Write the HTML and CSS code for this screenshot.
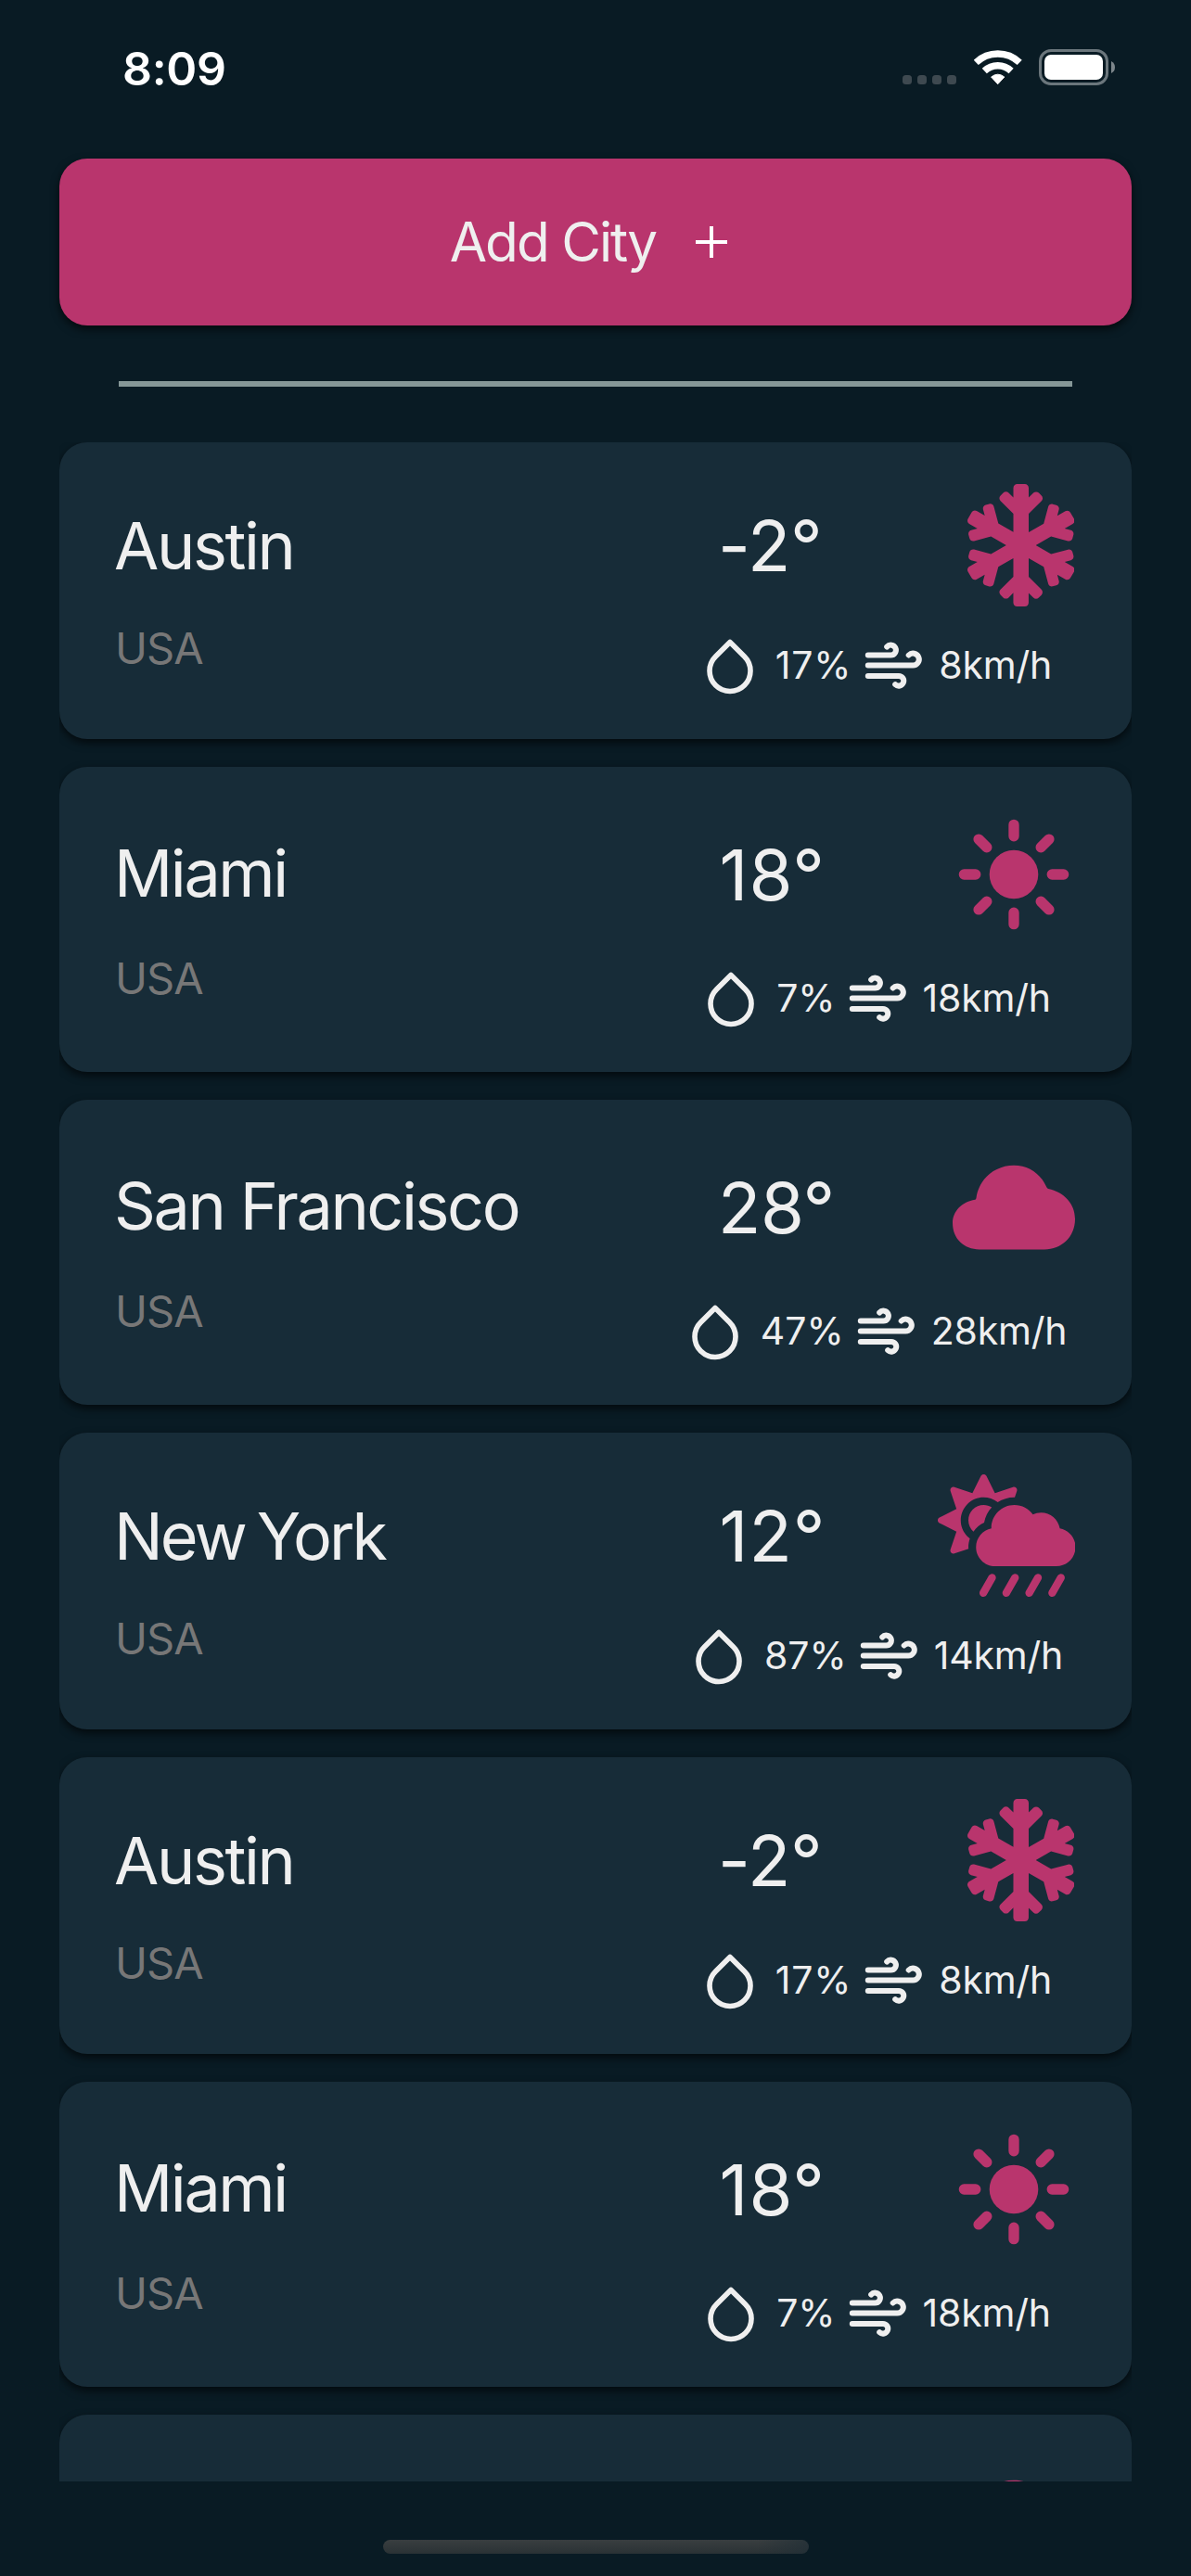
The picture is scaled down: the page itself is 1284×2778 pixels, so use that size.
FILE: index.html
```html
<!DOCTYPE html>
<html lang="en">
<head>
<meta charset="utf-8">
<title>Weather</title>
<link rel="stylesheet" href="styles.css">
</head>
<body>
<svg class="sprite" aria-hidden="true">
  <symbol id="drop" viewBox="0 0 24 24"><path fill="none" stroke="currentColor" stroke-width="2.05" stroke-linecap="round" stroke-linejoin="round" d="M12 2.69l5.66 5.66a8 8 0 1 1-11.31 0z"/></symbol>
  <symbol id="wind" viewBox="0 0 66 66"><path fill="none" stroke="currentColor" stroke-width="6" stroke-linecap="round" stroke-linejoin="round" d="M5.8 21.6H30.3A5.5 5.5 0 1 0 26.2 12.5M5.8 32.6H54.3A6.5 6.5 0 1 0 49.7 21.5M5.8 43.9H38.85A5.35 5.35 0 1 1 35.2 53.1"/></symbol>
  <symbol id="snow" viewBox="0 0 448 512"><path fill="currentColor" d="M440.3 345.2l-33.8-19.5 26-7c8.2-2.2 13.1-10.7 10.9-18.9l-4-14.9c-2.2-8.2-10.7-13.1-18.9-10.9l-70.8 19-63.9-37 63.8-36.9 70.8 19c8.2 2.2 16.7-2.7 18.9-10.9l4-14.9c2.2-8.2-2.7-16.7-10.9-18.9l-26-7 33.8-19.5c7.4-4.3 9.9-13.7 5.7-21.1L430.4 119c-4.3-7.4-13.7-9.9-21.1-5.7l-33.8 19.5 7-26c2.2-8.2-2.7-16.7-10.9-18.9l-14.9-4c-8.2-2.2-16.7 2.7-18.9 10.9l-19 70.8-62.8 36.2v-77.5l53.7-53.1c6.2-6.2 6.2-16.4 0-22.6l-11.3-11.3c-6.2-6.2-16.4-6.2-22.6 0L256 56.4V16c0-8.8-7.2-16-16-16h-32c-8.8 0-16 7.2-16 16v40.4l-19.7-19.7c-6.2-6.2-16.4-6.2-22.6 0L138.3 48c-6.3 6.2-6.3 16.4 0 22.6l53.7 53.1v77.5l-62.8-36.2-19-70.8c-2.2-8.2-10.7-13.1-18.9-10.9l-14.9 4c-8.2 2.2-13.1 10.7-10.9 18.9l7 26-33.8-19.5c-7.4-4.3-16.8-1.7-21.1 5.7L2.1 145.7c-4.3 7.4-1.7 16.8 5.7 21.1l33.8 19.5-26 7c-8.3 2.2-13.2 10.7-11 19l4 14.9c2.2 8.2 10.7 13.1 18.9 10.9l70.8-19 63.8 36.9-63.8 36.9-70.8-19c-8.2-2.2-16.7 2.7-18.9 10.9l-4 14.9c-2.2 8.2 2.7 16.7 10.9 18.9l26 7-33.8 19.6c-7.4 4.3-9.9 13.7-5.7 21.1l15.5 26.8c4.3 7.4 13.7 9.9 21.1 5.7l33.8-19.5-7 26c-2.2 8.2 2.7 16.7 10.9 18.9l14.9 4c8.2 2.2 16.7-2.7 18.9-10.9l19-70.8 62.8-36.2v77.5l-53.7 53.1c-6.3 6.2-6.3 16.4 0 22.6l11.3 11.3c6.2 6.2 16.4 6.2 22.6 0l19.7-19.7V496c0 8.8 7.2 16 16 16h32c8.8 0 16-7.2 16-16v-40.4l19.7 19.7c6.2 6.2 16.4 6.2 22.6 0l11.3-11.3c6.2-6.2 6.2-16.4 0-22.6L256 387.7v-77.5l62.8 36.2 19 70.8c2.2 8.2 10.7 13.1 18.9 10.9l14.9-4c8.2-2.2 13.1-10.7 10.9-18.9l-7-26 33.8 19.5c7.4 4.3 16.8 1.7 21.1-5.7l15.5-26.8c4.3-7.4 1.8-16.8-5.6-21z"/></symbol>
  <symbol id="sun" viewBox="0 0 512 512"><circle cx="256" cy="256" r="102" fill="currentColor"/><path stroke="currentColor" stroke-width="44" stroke-linecap="round" d="M256 48v48M256 416v48M48 256h48M416 256h48M403.1 108.9l-33.9 33.9M142.8 369.2l-33.9 33.9M403.1 403.1l-33.9-33.9M142.8 142.8l-33.9-33.9"/></symbol>
  <symbol id="cloud" viewBox="0 0 512 512"><path fill="currentColor" d="M112 432C48 432 0 388 0 322C0 272 40 232 94 224Q98 223 99 216C110 138 175 80 256 80C318 80 368 115 392 170Q395 177 400 178C466 192 512 240 512 305C512 378 456 432 384 432Z"/></symbol>
  <symbol id="rain" viewBox="0 0 576 512"><path fill="currentColor" d="M510.500 225.500c-6.900-37.200-39.300-65.500-78.500-65.500-12.300 0-23.900 3-34.300 8-17.400-24.100-45.600-40-77.700-40-53 0-96 43-96 96 0 .5.2 1.100.2 1.600C187.600 233 160 265.200 160 304c0 44.200 35.800 80 80 80h256c44.200 0 80-35.800 80-80 0-39.200-28.200-71.700-65.500-78.500zm-386.400 34.400c-37.400-37.400-37.400-98.300 0-135.800 34.600-34.600 89.100-36.800 126.700-7.400 20-12.900 43.600-20.700 69.200-20.700.7 0 1.300.2 2 .2l8.900-26.700c3.400-10.200-6.300-19.800-16.500-16.400l-75.300 25.100-35.500-71c-4.800-9.600-18.500-9.600-23.300 0l-35.500 71-75.300-25.100c-10.200-3.400-19.800 6.300-16.400 16.500l25.100 75.300-71 35.500c-9.600 4.800-9.600 18.500 0 23.300l71 35.500-25.100 75.300c-3.400 10.200 6.300 19.800 16.500 16.500l59.200-19.700c-.2-2.400-.7-4.700-.7-7.200 0-12.500 2.300-24.500 6.200-35.900-3.600-2.700-7.100-5.200-10.200-8.300zm69.800-58c4.300-24.500 15.800-46.400 31.900-64-9.800-6.200-21.400-9.900-33.800-9.900-35.300 0-64 28.700-64 64 0 18.700 8.200 35.400 21.100 47.100 11.300-15.900 26.600-28.900 44.800-37.200z"/><path stroke="currentColor" stroke-width="32" stroke-linecap="round" d="M227 432l-36.600 64M323 432l-36.600 64M419 432l-36.600 64M515 432l-36.600 64"/></symbol>
</svg>

<header class="status">
  <span class="clock">8:09</span>
  <div class="indicators">
    <div class="signal"><i></i><i></i><i></i><i></i></div>
    <svg class="wifi" viewBox="0 0 52 39"><path fill="none" stroke="#fff" stroke-width="7.4" d="M2.200 14.400A34 34 0 0 1 49.200 14.400M11.300 23.500A20.800 20.800 0 0 1 40.100 23.500"/><path fill="#fff" stroke="#fff" stroke-width="1" stroke-linejoin="round" d="M18.600 30Q25.700 24.400 32.800 30L25.700 37.700Z"/></svg>
    <div class="battery"><div class="level"></div></div>
    <svg class="nub" viewBox="0 0 4 13"><path fill="#7d868b" d="M0 0Q4 2 4 6.500Q4 11 0 13Z"/></svg>
  </div>
</header>

<button class="add"><span>Add City</span><svg class="plus" viewBox="0 0 34 34"><path stroke="#fff" stroke-width="4" d="M17 0V34M0 17H34"/></svg></button>
<hr class="divider">

<main class="list">
  <article class="card">
    <div class="place"><h2 class="city">Austin</h2><p class="country">USA</p></div>
    <div class="weather">
      <div class="now"><span class="temp">-2°</span><svg class="icon narrow"><use href="#snow"/></svg></div>
      <div class="stats"><svg class="stat-icon"><use href="#drop"/></svg><span class="humidity loose">17%</span><svg class="stat-icon"><use href="#wind"/></svg><span class="speed">8km/h</span></div>
    </div>
  </article>
  <article class="card">
    <div class="place"><h2 class="city">Miami</h2><p class="country">USA</p></div>
    <div class="weather">
      <div class="now tall"><span class="temp spaced">18°</span><svg class="icon"><use href="#sun"/></svg></div>
      <div class="stats"><svg class="stat-icon"><use href="#drop"/></svg><span class="humidity">7%</span><svg class="stat-icon"><use href="#wind"/></svg><span class="speed">18km/h</span></div>
    </div>
  </article>
  <article class="card">
    <div class="place"><h2 class="city">San Francisco</h2><p class="country">USA</p></div>
    <div class="weather">
      <div class="now tall"><span class="temp">28°</span><svg class="icon"><use href="#cloud"/></svg></div>
      <div class="stats"><svg class="stat-icon"><use href="#drop"/></svg><span class="humidity">47%</span><svg class="stat-icon"><use href="#wind"/></svg><span class="speed">28km/h</span></div>
    </div>
  </article>
  <article class="card">
    <div class="place"><h2 class="city new-york">New York</h2><p class="country">USA</p></div>
    <div class="weather">
      <div class="now"><span class="temp spaced">12°</span><svg class="icon wide"><use href="#rain"/></svg></div>
      <div class="stats"><svg class="stat-icon"><use href="#drop"/></svg><span class="humidity">87%</span><svg class="stat-icon"><use href="#wind"/></svg><span class="speed">14km/h</span></div>
    </div>
  </article>
  <article class="card">
    <div class="place"><h2 class="city">Austin</h2><p class="country">USA</p></div>
    <div class="weather">
      <div class="now"><span class="temp">-2°</span><svg class="icon narrow"><use href="#snow"/></svg></div>
      <div class="stats"><svg class="stat-icon"><use href="#drop"/></svg><span class="humidity loose">17%</span><svg class="stat-icon"><use href="#wind"/></svg><span class="speed">8km/h</span></div>
    </div>
  </article>
  <article class="card">
    <div class="place"><h2 class="city">Miami</h2><p class="country">USA</p></div>
    <div class="weather">
      <div class="now tall"><span class="temp spaced">18°</span><svg class="icon"><use href="#sun"/></svg></div>
      <div class="stats"><svg class="stat-icon"><use href="#drop"/></svg><span class="humidity">7%</span><svg class="stat-icon"><use href="#wind"/></svg><span class="speed">18km/h</span></div>
    </div>
  </article>
  <article class="card">
    <div class="place"></div>
    <div class="weather">
      <div class="now tall"><span class="temp"></span><svg class="icon"><use href="#cloud"/></svg></div>
      <div class="stats"></div>
    </div>
  </article>
</main>
<footer class="home"><div class="home-bar"></div></footer>
</body>
</html>
```
FILE: styles.css
```css
* { box-sizing: border-box; margin: 0; padding: 0; }

body {
  display: flex;
  flex-direction: column;
  width: 1284px;
  height: 2778px;
  overflow: hidden;
  background: #091b24;
  color: #efefef;
  font-family: Inter, "Liberation Sans", sans-serif;
}

.sprite { display: none; }

/* Status bar */
.status {
  display: flex;
  justify-content: space-between;
  align-items: flex-start;
  flex: none;
  height: 171px;
  padding: 54px 82px 0 132px;
  color: #fff;
}
.clock { font-size: 50px; font-weight: 600; line-height: 40px; letter-spacing: -0.3px; }
.indicators { display: flex; align-items: center; height: 39px; margin-top: -1px; }
.signal { display: flex; align-self: flex-end; gap: 6px; margin: 0 19px 1px 0; }
.signal i { width: 10px; height: 10px; border-radius: 3.5px; background: #3e4950; }
.wifi { width: 52px; height: 39px; margin-right: 18px; }
.battery { width: 75px; height: 39px; padding: 3px; border: 3px solid #6b767c; border-radius: 13px; }
.level { height: 27px; border-radius: 7px; background: #fff; }
.nub { width: 4px; height: 13px; margin-left: 3px; }

/* Add button */
.add {
  display: flex;
  justify-content: center;
  align-items: center;
  flex: none;
  height: 180px;
  margin: 0 64px;
  border: 0;
  border-radius: 30px;
  background: #b9356d;
  box-shadow: 0 4px 10px rgba(0, 0, 0, 0.65);
  color: #efefef;
  font: 400 58.5px/72px Inter, "Liberation Sans", sans-serif;
  letter-spacing: -2px;
}
.plus { width: 34px; height: 34px; margin: 0 15px 0 43px; }

.divider { flex: none; height: 6px; margin: 60px 128px; border: 0; background: #859797; }

/* City cards */
.list {
  display: flex;
  flex-direction: column;
  gap: 30px;
  flex: none;
  height: 2199px;
  margin: 0 64px;
  overflow: hidden;
}
.card {
  display: flex;
  justify-content: space-between;
  flex: none;
  padding: 30px 60px;
  border-radius: 30px;
  background: #172c38;
  box-shadow: 0 4px 10px rgba(0, 0, 0, 0.65);
}
.place { display: flex; flex-direction: column; justify-content: space-evenly; }
.city { margin-left: -1px; font-size: 70px; font-weight: 400; line-height: 86px; letter-spacing: -2.4px; white-space: nowrap; }
.new-york { letter-spacing: -2.9px; word-spacing: -4px; }
.country { padding-bottom: 2px; color: #777; font-size: 47px; line-height: 55px; letter-spacing: -0.9px; }

.weather { width: 432px; }
.now { display: flex; justify-content: space-between; align-items: center; height: 162px; padding: 0 1px 0 46px; }
.now.tall { height: 171px; }
.temp { font-size: 76px; line-height: 94px; letter-spacing: -0.4px; }
.temp.spaced { margin-left: 1.5px; letter-spacing: 1px; }
.icon { width: 132px; height: 132px; color: #b9356d; }
.icon.narrow { width: 115.5px; margin-right: 1px; }
.icon.wide { width: 148.5px; }

.stats { display: flex; justify-content: center; align-items: center; height: 98px; }
.stat-icon { flex: none; width: 66px; height: 66px; }
.humidity, .speed { margin-left: 16px; padding-bottom: 2px; font-size: 41px; line-height: 50px; }
.humidity { margin-right: 12px; }
.humidity.loose { letter-spacing: 0.8px; }
.speed { letter-spacing: -0.2px; }

/* Home indicator */
.home { display: flex; justify-content: center; padding-top: 63px; }
.home-bar {
  width: 459px;
  height: 15px;
  border-radius: 7.5px;
  background: linear-gradient(90deg, transparent 88%, rgba(32, 46, 54, 0.7)), linear-gradient(#393e40, #2a3235);
}
```
